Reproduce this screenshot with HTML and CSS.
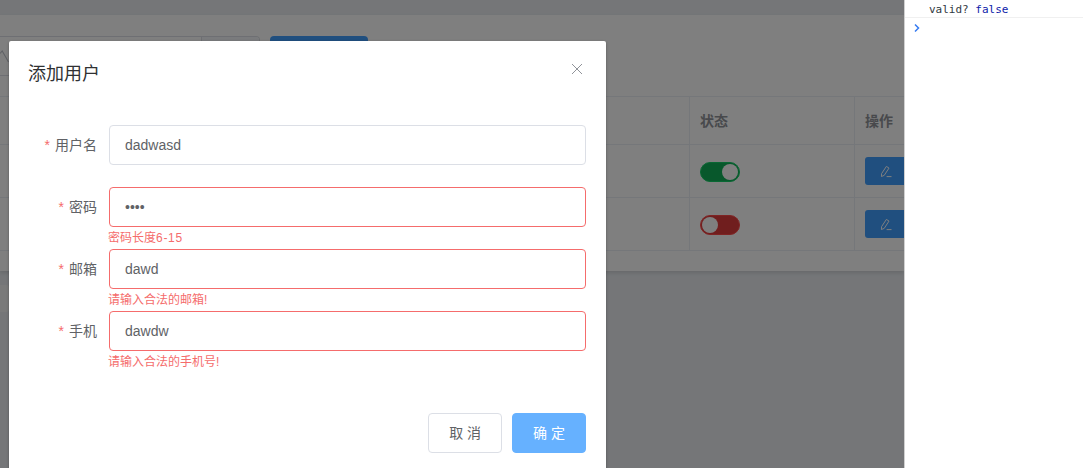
FILE: index.html
```html
<!DOCTYPE html>
<html lang="zh-CN">
<head>
<meta charset="utf-8">
<title>添加用户</title>
<link rel="stylesheet" href="styles.css">
</head>
<body>
<div class="screen">
  <main class="app">
    <section class="card">
      <div class="toolbar">
        <div class="search">
          <svg class="search-text" viewBox="0 0 9 14" width="9" height="14"><path d="M0 3.5 2.2 1 8.5 12"/></svg>
          <span class="search-append"></span>
        </div>
        <span class="add-btn"></span>
      </div>
      <div class="table">
        <div class="tr head">
          <div class="td"></div>
          <div class="td">状态</div>
          <div class="td">操作</div>
        </div>
        <div class="tr row">
          <div class="td"></div>
          <div class="td"><span class="switch on"><i></i></span></div>
          <div class="td">
            <span class="edit-btn">
              <svg viewBox="0 0 16 16" width="16" height="16"><path d="M2.6 10.6 7.4 3.4l2.6 1.7-4.8 7.3-2.8 1.1z M12.5 13.6H7.6"/></svg>
            </span>
          </div>
        </div>
        <div class="tr row">
          <div class="td"></div>
          <div class="td"><span class="switch off"><i></i></span></div>
          <div class="td">
            <span class="edit-btn">
              <svg viewBox="0 0 16 16" width="16" height="16"><path d="M2.6 10.6 7.4 3.4l2.6 1.7-4.8 7.3-2.8 1.1z M12.5 13.6H7.6"/></svg>
            </span>
          </div>
        </div>
      </div>
    </section>
    <div class="pager"></div>

    <div class="overlay"></div>

    <div class="dialog">
      <header class="dialog-head">
        <span class="dialog-title">添加用户</span>
        <svg class="dialog-close" viewBox="0 0 12 12" width="12" height="12"><path d="M1 1l10 10M11 1 1 11"/></svg>
      </header>
      <form class="dialog-body">
        <div class="item">
          <label class="label"><span class="star">*</span>用户名</label>
          <div class="control"><input class="input" type="text" value="dadwasd"></div>
        </div>
        <div class="item bad">
          <label class="label"><span class="star">*</span>密码</label>
          <div class="control"><input class="input" type="password" value="abcd"><div class="error">密码长度<span class="num">6-15</span></div></div>
        </div>
        <div class="item bad">
          <label class="label"><span class="star">*</span>邮箱</label>
          <div class="control"><input class="input" type="text" value="dawd"><div class="error">请输入合法的邮箱!</div></div>
        </div>
        <div class="item bad">
          <label class="label"><span class="star">*</span>手机</label>
          <div class="control"><input class="input" type="text" value="dawdw"><div class="error">请输入合法的手机号!</div></div>
        </div>
      </form>
      <footer class="dialog-foot">
        <button class="btn" type="button">取 消</button>
        <button class="btn primary" type="button">确 定</button>
      </footer>
    </div>
  </main>

  <aside class="console">
    <div class="log">valid? <span class="kw">false</span></div>
    <div class="prompt">
      <svg viewBox="0 0 8 10" width="8" height="10"><path d="M2 1.5 5.5 5 2 8.5"/></svg>
    </div>
  </aside>
</div>
</body>
</html>
```
FILE: styles.css
```css
* { box-sizing: border-box; }
html, body { margin: 0; height: 100%; overflow: hidden; }
body { font-family: "Liberation Sans", "Noto Sans CJK SC", sans-serif; font-size: 14px; color: #606266; }

.screen { display: flex; width: 1083px; height: 468px; }

.app { position: relative; width: 904px; flex: none; overflow: hidden; background: #eaedf1; padding-top: 15px; }

.card { background: #fff; height: 256px; padding-top: 21px; box-shadow: 0 2px 4px rgba(0,0,0,.12); }

.toolbar { display: flex; height: 40px; gap: 10px; margin-bottom: 20px; }
.search { display: flex; justify-content: space-between; width: 260px; height: 40px; border: 1px solid #dcdfe6; border-radius: 4px; border-left: 0; border-top-left-radius: 0; border-bottom-left-radius: 0; overflow: hidden; }
.search-text { margin-top: 13px; fill: none; stroke: #c0c4cc; stroke-width: 1.1; }
.search-append { width: 58px; border-left: 1px solid #dcdfe6; background: #f5f7fa; }
.add-btn { width: 98px; height: 40px; border-radius: 4px; background: #409eff; }

.table { border-top: 1px solid #ebeef5; }
.tr { display: grid; grid-template-columns: 690px 165px 1fr; border-bottom: 1px solid #ebeef5; }
.head { height: 48px; font-weight: 700; color: #909399; }
.row { height: 53px; }
.td { display: flex; align-items: center; padding-left: 10px; border-right: 1px solid #ebeef5; }
.td:last-child { border-right: 0; }
.head .td { padding-bottom: 1px; }

.switch { display: block; position: relative; width: 40px; height: 20px; border-radius: 10px; border: 1px solid; margin-top: 2px; }
.switch i { position: absolute; top: 1px; width: 16px; height: 16px; border-radius: 50%; background: #fff; }
.switch.on { background: #10b058; border-color: #13ce66; }
.switch.on i { right: 1px; }
.switch.off { background: #e03c3c; border-color: #ff4949; }
.switch.off i { left: 1px; }

.edit-btn { display: flex; align-items: center; justify-content: center; width: 44px; height: 28px; border-radius: 3px; background: #409eff; margin-top: -1px; }
.edit-btn svg { fill: none; stroke: #fff; stroke-width: 1; }

.pager { width: 9px; height: 27px; margin-top: 14px; background: #f4f4f5; border-radius: 0 3px 3px 0; }

.overlay { position: absolute; inset: 0; background: rgba(0,0,0,.5); }

.dialog { position: absolute; left: 9px; top: 41px; width: 597px; background: #fff; border-radius: 2px; box-shadow: 0 1px 3px rgba(0,0,0,.3); }
.dialog-head { position: relative; padding: 21px 20px 9px; }
.dialog-title { display: block; margin-left: -1px; font-size: 18px; line-height: 24px; color: #303133; }
.dialog-close { position: absolute; top: 22px; right: 23px; fill: none; stroke: #909399; stroke-width: 1; }
.dialog-body { padding: 30px 20px; }

.item { display: flex; margin-bottom: 22px; }
.label { width: 80px; padding-right: 12px; text-align: right; line-height: 40px; flex: none; white-space: nowrap; }
.star { color: #f56c6c; margin-right: 5px; }
.control { position: relative; flex: 1; }
.input { display: block; width: 100%; height: 40px; padding: 0 15px; border: 1px solid #dcdfe6; border-radius: 4px; font: inherit; color: #606266; background: #fff; outline: 0; }
.bad .input { border-color: #f56c6c; }
.error { position: absolute; top: 100%; left: -1px; padding-top: 5px; font-size: 12px; line-height: 1; color: #f56c6c; white-space: nowrap; }
.num { letter-spacing: .7px; }

.dialog-foot { display: flex; justify-content: flex-end; gap: 10px; padding: 10px 20px 20px; }
.btn { height: 40px; padding: 12px 20px; border: 1px solid #dcdfe6; border-radius: 4px; background: #fff; color: #606266; font: inherit; line-height: 1; }
.btn.primary { border-color: #66b1ff; background: #66b1ff; color: #fff; }

.console { flex: 1; border-left: 1px solid #d0d0d0; background: #fff; font-family: "DejaVu Sans Mono", monospace; font-size: 11px; color: #303942; }
.log { height: 18px; padding: 2px 0 0 24px; line-height: 15px; border-bottom: 1px solid #f0f0f0; }
.kw { color: #0d22aa; }
.prompt { display: flex; padding: 5px 0 0 8px; }
.prompt svg { fill: none; stroke: #367cf1; stroke-width: 1.5; }
```
